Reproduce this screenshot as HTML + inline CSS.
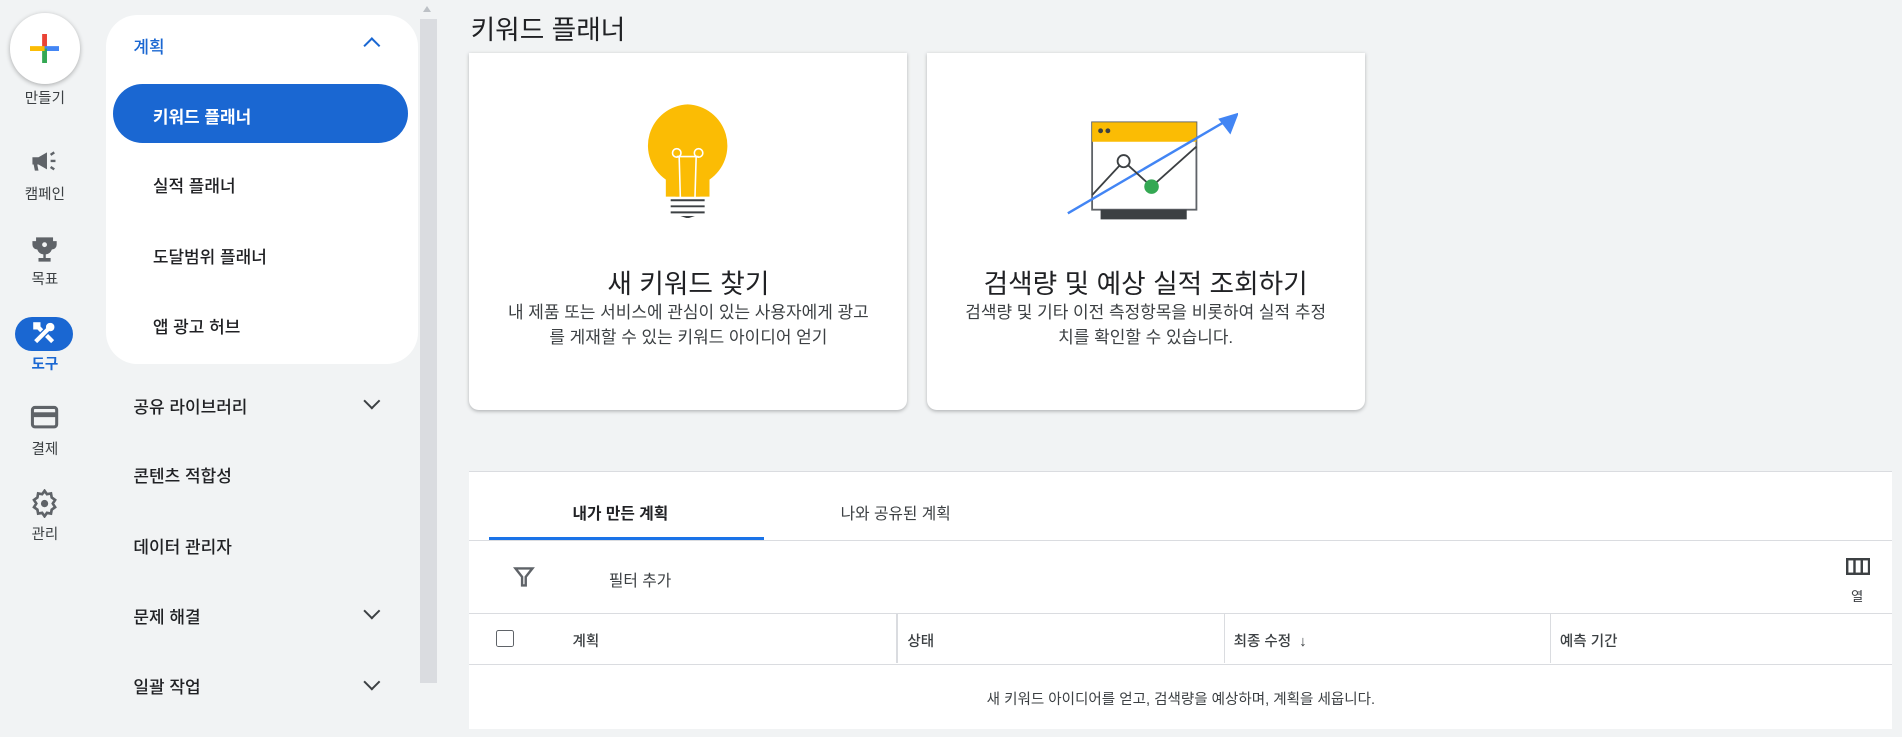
<!DOCTYPE html>
<html><head><meta charset="utf-8"><style>
html{zoom:1.213}
body{margin:0;width:1568px;height:607px;background:#f1f3f4;font-family:"Liberation Sans","Noto Sans CJK KR",sans-serif;color:#202124;position:relative;overflow:hidden}
.a{position:absolute}
.lbl{font-size:12px;color:#3c4043;width:74px;text-align:center;left:0}
.it{font-size:14px;left:110px;color:#202124;font-weight:500}
.chev{position:absolute;left:302px;width:8px;height:8px;border-right:2px solid #3c4043;border-bottom:2px solid #3c4043;transform:rotate(45deg)}
.card{background:#fff;border-radius:0 0 8px 8px;box-shadow:0 1px 3px rgba(60,64,67,.35)}
.ct{font-size:22px;text-align:center;width:100%;color:#202124}
.cd{font-size:14px;text-align:center;width:100%;color:#3c4043;line-height:21px}
.th{font-size:12px;color:#3c4043;font-weight:500}
</style></head><body>
<!-- rail -->
<div class="a" style="left:8px;top:11px;width:58px;height:58px;border-radius:50%;background:#fff;box-shadow:0 1px 4px rgba(0,0,0,.3)"></div>
<svg class="a" style="left:25px;top:28px" width="24" height="24"><rect x="10" y="0" width="4" height="12" fill="#ea4335"/><rect x="12" y="10" width="12" height="4" fill="#4285f4"/><rect x="10" y="12" width="4" height="12" fill="#34a853"/><rect x="0" y="10" width="12" height="4" fill="#fbbc04"/></svg>
<div class="a lbl" style="top:72px">만들기</div>
<svg class="a" style="left:25px;top:124px" width="24" height="20" viewBox="0 0 24 20"><path d="M2 6h5l7-4v14l-7-4H6l1 5H4l-1-5H2z" fill="#5f6368"/><path d="M17 4l3-2M17 9h4M17 14l3 2" stroke="#5f6368" stroke-width="2"/></svg>
<div class="a lbl" style="top:151px">캠페인</div>
<svg class="a" style="left:25px;top:194px" width="24" height="24" viewBox="0 0 24 24"><path d="M5 2h14v3h3v3a4 4 0 0 1-4 4 6 6 0 0 1-5 4v3h4v3H7v-3h4v-3a6 6 0 0 1-5-4 4 4 0 0 1-4-4V5h3z" fill="#5f6368"/><circle cx="12" cy="8" r="2" fill="#f1f3f4"/></svg>
<div class="a lbl" style="top:221px">목표</div>
<div class="a" style="left:12px;top:261px;width:48px;height:28px;border-radius:14px;background:#1a67d2"></div>
<svg class="a" style="left:26px;top:265px" width="20" height="20" viewBox="0 0 20 20"><path d="M3 17L17 3M3 3l5 5M12 12l5 5" stroke="#fff" stroke-width="3.5"/><circle cx="15" cy="5" r="3.5" fill="#fff"/><rect x="1" y="1" width="6" height="6" fill="#fff"/></svg>
<div class="a lbl" style="top:291px;color:#1a67d2;font-weight:bold">도구</div>
<svg class="a" style="left:25px;top:334px" width="24" height="20"><rect x="2" y="2" width="20" height="16" rx="2" fill="none" stroke="#5f6368" stroke-width="2.5"/><rect x="2" y="6" width="20" height="4" fill="#5f6368"/></svg>
<div class="a lbl" style="top:361px">결제</div>
<svg class="a" style="left:25px;top:403px" width="24" height="24" viewBox="0 0 24 24"><path d="M12 1.5l2 2.8 3.3-.6.6 3.3 2.8 2-1.9 3 1.9 3-2.8 2-.6 3.3-3.3-.6-2 2.8-2-2.8-3.3.6-.6-3.3-2.8-2 1.9-3-1.9-3 2.8-2 .6-3.3 3.3.6z" fill="none" stroke="#5f6368" stroke-width="2.2"/><circle cx="12" cy="12" r="3" fill="#5f6368"/></svg>
<div class="a lbl" style="top:431px">관리</div>
<!-- panel -->
<div class="a" style="left:87px;top:12px;width:258px;height:288px;background:#fff;border-radius:26px"></div>
<div class="a" style="left:110px;top:27px;font-size:14px;color:#1a67d2;font-weight:500">계획</div>
<div class="chev" style="top:33px;transform:rotate(-135deg);border-color:#1a67d2"></div>
<div class="a" style="left:93px;top:69px;width:243px;height:49px;border-radius:25px;background:#1a67d2"></div>
<div class="a" style="left:126px;top:85px;font-size:14px;color:#fff;font-weight:bold">키워드 플래너</div>
<div class="a it" style="left:126px;top:142px">실적 플래너</div>
<div class="a it" style="left:126px;top:200px">도달범위 플래너</div>
<div class="a it" style="left:126px;top:258px">앱 광고 허브</div>
<div class="a it" style="top:324px">공유 라이브러리</div><div class="chev" style="top:326px"></div>
<div class="a it" style="top:381px">콘텐츠 적합성</div>
<div class="a it" style="top:439px">데이터 관리자</div>
<div class="a it" style="top:497px">문제 해결</div><div class="chev" style="top:499px"></div>
<div class="a it" style="top:555px">일괄 작업</div><div class="chev" style="top:557px"></div>
<!-- scrollbar -->
<div class="a" style="left:346px;top:16px;width:14px;height:547px;background:#dadce0"></div>
<div class="a" style="left:349px;top:5px;width:0;height:0;border-left:4px solid transparent;border-right:4px solid transparent;border-bottom:5px solid #bdc1c6"></div>
<!-- title -->
<div class="a" style="left:388px;top:7px;font-size:22px;color:#202124">키워드 플래너</div>
<!-- cards -->
<div class="a card" style="left:387px;top:44px;width:361px;height:294px">
<svg class="a" style="left:144px;top:40px" width="72" height="96" viewBox="0 0 72 96"><path d="M36 2a34 34 0 0 1 18 62v14H18V64A34 34 0 0 1 36 2z" fill="#fbbc04"/><path d="M26 78V72h20v6" fill="#fbbc04"/><g stroke="#fff" stroke-width="1.3" fill="none"><path d="M30 80l-1-35M42 80l1-35M27 45h18"/><circle cx="27" cy="42" r="3.5"/><circle cx="45" cy="42" r="3.5"/></g><g stroke="#3c4043" stroke-width="1.6"><path d="M22 81h28M22 86h28M22 91h28"/></g><path d="M30 94h12l-6 2z" fill="#3c4043"/></svg>
<div class="a ct" style="top:172px">새 키워드 찾기</div>
<div class="a cd" style="top:203px">내 제품 또는 서비스에 관심이 있는 사용자에게 광고<br>를 게재할 수 있는 키워드 아이디어 얻기</div>
</div>
<div class="a card" style="left:764px;top:44px;width:361px;height:294px">
<svg class="a" style="left:112px;top:46px" width="145" height="92" viewBox="0 0 145 92"><rect x="24" y="11" width="86" height="72" fill="#fff" stroke="#5f6368" stroke-width="1.5"/><rect x="24" y="11" width="86" height="16" fill="#fbbc04"/><circle cx="31" cy="18" r="2" fill="#3c4043"/><circle cx="37" cy="18" r="2" fill="#3c4043"/><rect x="31" y="83" width="71" height="8" fill="#3c4043"/><path d="M4 86L141 6" stroke="#4285f4" stroke-width="2"/><path d="M145 3l-17 5 10 13z" fill="#4285f4"/><path d="M24 71L50 43l23 21 37-33" stroke="#3c4043" stroke-width="1.5" fill="none"/><circle cx="50" cy="43" r="5" fill="#fff" stroke="#3c4043" stroke-width="1.5"/><circle cx="73" cy="64" r="6" fill="#34a853"/></svg>
<div class="a ct" style="top:172px">검색량 및 예상 실적 조회하기</div>
<div class="a cd" style="top:203px">검색량 및 기타 이전 측정항목을 비롯하여 실적 추정<br>치를 확인할 수 있습니다.</div>
</div>
<!-- table -->
<div class="a" style="left:387px;top:388px;width:1173px;height:212px;background:#fff;border-top:1px solid #dadce0"></div>
<div class="a" style="left:472px;top:413px;font-size:13px;font-weight:bold">내가 만든 계획</div>
<div class="a" style="left:693px;top:413px;font-size:13px;color:#3c4043">나와 공유된 계획</div>
<div class="a" style="left:403px;top:443px;width:227px;height:2px;background:#1a73e8"></div>
<div class="a" style="left:387px;top:445px;width:1173px;height:1px;background:#dadce0"></div>
<svg class="a" style="left:423px;top:467px" width="18" height="18" viewBox="0 0 18 18"><path d="M2 2h14l-5.5 7v7h-3V9z" fill="none" stroke="#5f6368" stroke-width="2"/></svg>
<div class="a" style="left:502px;top:468px;font-size:13px;color:#3c4043">필터 추가</div>
<svg class="a" style="left:1522px;top:460px" width="20" height="14"><rect x="1" y="1" width="18" height="12" fill="none" stroke="#3c4043" stroke-width="2"/><path d="M7 1v12M13 1v12" stroke="#3c4043" stroke-width="2"/></svg>
<div class="a" style="left:1526px;top:483px;font-size:11px;color:#3c4043">열</div>
<div class="a" style="left:387px;top:505px;width:1173px;height:1px;background:#dadce0"></div>
<div class="a" style="left:409px;top:519px;width:13px;height:13px;border:1.5px solid #5f6368;border-radius:2px"></div>
<div class="a th" style="left:472px;top:519px">계획</div>
<div class="a" style="left:739px;top:506px;width:1px;height:41px;background:#dadce0"></div>
<div class="a th" style="left:748px;top:519px">상태</div>
<div class="a" style="left:1009px;top:506px;width:1px;height:41px;background:#dadce0"></div>
<div class="a th" style="left:1017px;top:519px">최종 수정 &nbsp;↓</div>
<div class="a" style="left:1278px;top:506px;width:1px;height:41px;background:#dadce0"></div>
<div class="a th" style="left:1286px;top:519px">예측 기간</div>
<div class="a" style="left:387px;top:547px;width:1173px;height:1px;background:#dadce0"></div>
<div class="a" style="left:387px;top:567px;width:1173px;text-align:center;font-size:12px;color:#3c4043">새 키워드 아이디어를 얻고, 검색량을 예상하며, 계획을 세웁니다.</div>
</body></html>
